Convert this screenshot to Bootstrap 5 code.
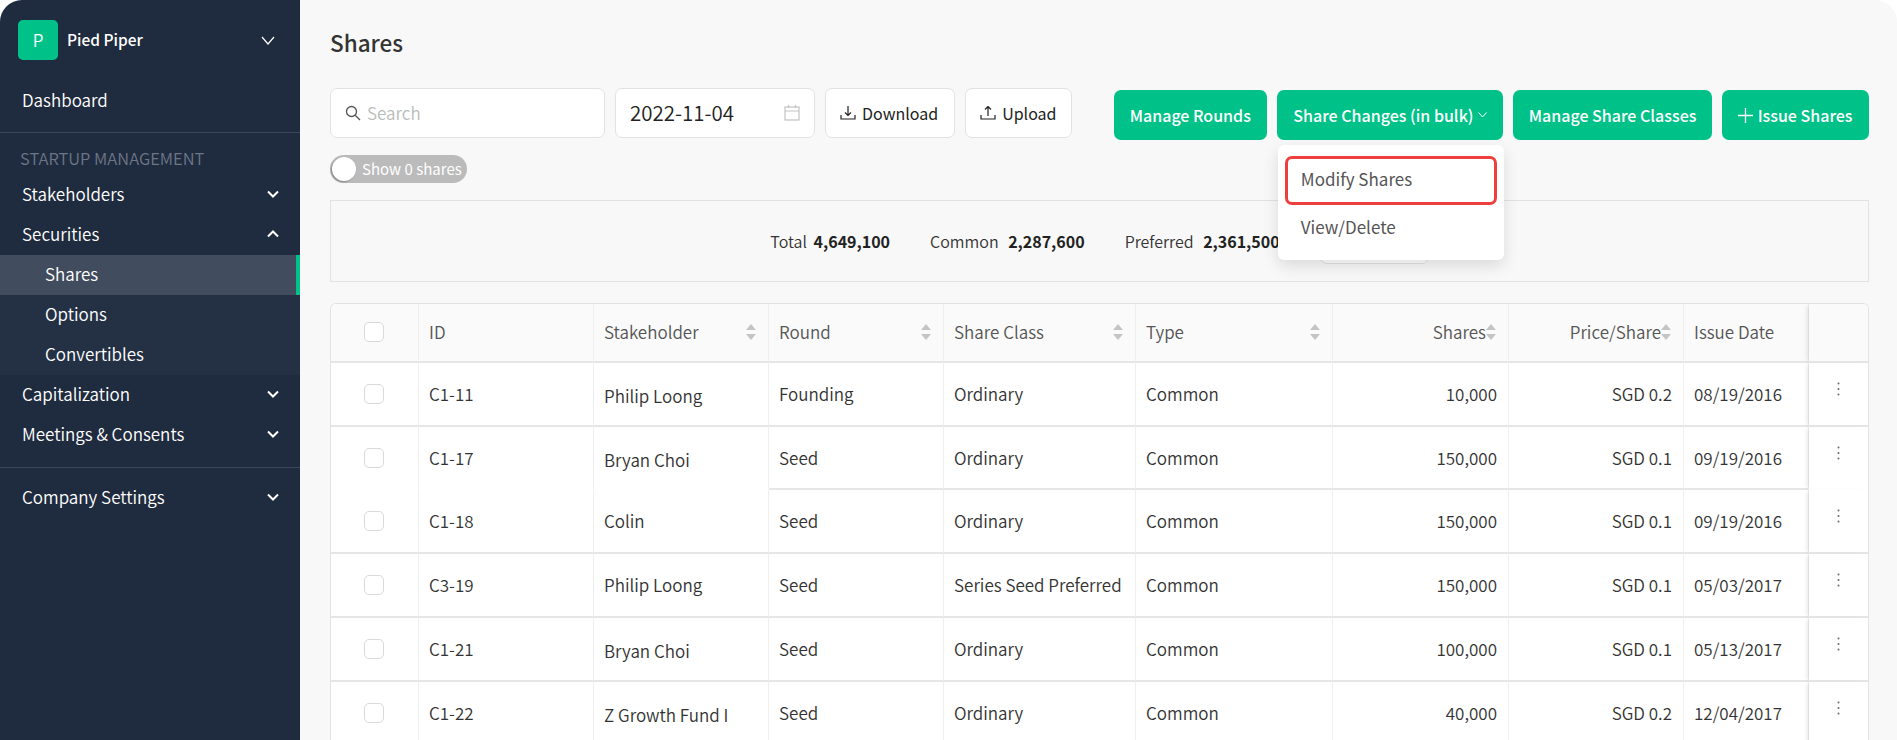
<!DOCTYPE html>
<html lang="en">
<head>
<meta charset="utf-8">
<title>Shares</title>
<link href="https://cdn.jsdelivr.net/npm/bootstrap@5.3.0/dist/css/bootstrap.min.css" rel="stylesheet">
<style>
html,body{height:740px;overflow:hidden;background:#fff;font-family:"Noto Sans CJK KR","Noto Sans",sans-serif;font-size:17px;font-weight:350;color:#333}
.app-shell{height:740px;border-radius:22px 22px 0 0;overflow:hidden;background:#f8f8f8}
.side-bar{width:300px;flex:none;background:#1f2b3e;color:#fff}
.brand-row{height:80px;padding:20px 25px 20px 18px}
.brand-logo{width:40px;height:40px;border-radius:5px;background:#00c288;font-size:17px}
.brand-name{font-size:15.5px;font-weight:500;margin-left:9px;margin-top:-1px}
.dash-row{height:53px;padding:0 22px 2px;line-height:40px;border-bottom:1px solid #3a465a;font-size:17px}
.group-label{color:#6d7687;font-size:16.5px;padding:13px 20px 0;line-height:24px;height:42px}
.side-link{height:40px;padding:0 21px 2px 22px;font-size:17px;color:#fff}
.side-sub{background:#243145}
.side-sub .side-link{padding-left:45px}
.side-sub .side-link.is-on{background:#414c5e;border-right:4px solid #00c288}
.side-rule{border-top:1px solid #3a465a;margin-top:12px;height:11px}
.main-pane{flex:1;min-width:0;padding:22px 28px 0 30px}
.page-title{font-size:22.5px;font-weight:500;color:#333;line-height:40px;margin:0 0 26px}
.tool-row{gap:10px}
.tool-btn{height:50px;border:1px solid #e2e2e2;background:#fff;border-radius:7px;color:#222;font-size:16px;font-weight:400}
.search-box{width:275px;color:#b8bdb9;font-size:17px;padding:0 14px;gap:6px;font-weight:350}
.date-box{width:200px;font-size:20.5px;padding:0 14px 2px;font-weight:350}
.file-btn{padding:0 16px 0 14px;gap:6px}
.file-btn.tight-end{padding-right:14px}
.green-btn{height:50px;background:#00c288;color:#fff;border:0;border-radius:7px;font-size:16px;font-weight:500;padding:0 16px;white-space:nowrap}
.green-btn.roomy{padding:0 16.500px}
.green-btn.snug{padding:0 15.500px}
.green-btn:hover,.green-btn:focus{background:#00c288;color:#fff}
.right-tools{gap:10px;margin-top:2px}
.toggle-pill{width:137px;height:28px;border-radius:14px;background:#bbb;color:#fff;font-size:15px;font-weight:400;padding-left:2px;margin-top:17px}
.toggle-knob{width:24px;height:24px;border-radius:50%;background:#fff;box-shadow:-1px 1px 2px rgba(0,0,0,.3);margin-right:6px}
.sum-box{height:82px;border:1px solid #e2e2e2;margin-top:17px;font-size:16px;gap:40px;color:#333}
.sum-box b{font-weight:700;color:#222;margin-left:3px}
.sum-box span+span b{margin-left:6px}
.sum-blank{width:109px;height:46px;background:#fff;border:1px solid #e2e2e2;border-radius:7px}
.menu-float{top:55px;left:1px;width:226px;height:115px;min-width:0;padding:11px 7px;border:0;border-radius:6px;box-shadow:0 6px 16px rgba(0,0,0,.12)}
.menu-float .dropdown-item{font-size:17px;color:#555;height:49px;line-height:40px;padding:0 13px;border:3px solid transparent;border-radius:7px}
.menu-float .dropdown-item+.dropdown-item{line-height:38px}
.menu-float .dropdown-item.is-marked{border-color:#ee3f3f;background:#fff}
.grid-wrap{margin-top:21px;border:1px solid #e2e2e2;border-bottom:0;border-radius:6px 6px 0 0;background:#fff;overflow:hidden}
.share-grid{table-layout:fixed;width:100%;border-collapse:separate;border-spacing:0;margin:0;font-size:17px;color:#333}
.share-grid th{height:59px;background:#fafafa;font-weight:350;color:#555;padding:0 12px 2px 10px;border-right:1px solid #efefef;border-bottom:2px solid #e6e6e6;vertical-align:middle}
.share-grid td{height:64px;padding:0 12px 0 10px;border-right:1px solid #efefef;border-bottom:2px solid #e6e6e6;vertical-align:middle;white-space:nowrap;background:#fff}
.share-grid td.text-end{padding-right:11px}
.share-grid tr.short-row td{height:63px}
.share-grid td.no-rule{border-bottom-color:transparent}
.share-grid td.nudge-down{padding-top:4px}
.share-grid .act-col{border-right:0;box-shadow:-4px 0 4px -2px rgba(0,0,0,.1);text-align:center;padding:0}
.share-grid td.act-col svg{margin-bottom:12px}
.box-tick{display:block;width:20px;height:20px;margin:0 auto;border:1px solid #d9d9d9;border-radius:5px;background:#fff}
.sort-mark{flex:none}
</style>
</head>
<body>
<div class="app-shell d-flex">
  <nav class="side-bar">
    <div class="brand-row d-flex align-items-center">
      <span class="brand-logo d-flex align-items-center justify-content-center">P</span>
      <span class="brand-name flex-grow-1">Pied Piper</span>
      <svg width="14" height="9" viewBox="0 0 14 9" fill="none" stroke="#fff" stroke-width="1.2"><path d="M1 1l6 7 6-7"/></svg>
    </div>
    <div class="dash-row">Dashboard</div>
    <div class="group-label">STARTUP MANAGEMENT</div>
    <div class="side-link d-flex align-items-center justify-content-between">Stakeholders <svg width="12" height="8" viewBox="0 0 12 8" fill="none" stroke="#fff" stroke-width="2"><path d="M1 1.5l5 5 5-5"/></svg></div>
    <div class="side-link d-flex align-items-center justify-content-between">Securities <svg width="12" height="8" viewBox="0 0 12 8" fill="none" stroke="#fff" stroke-width="2"><path d="M1 6.5l5-5 5 5"/></svg></div>
    <div class="side-sub">
      <div class="side-link is-on d-flex align-items-center">Shares</div>
      <div class="side-link d-flex align-items-center">Options</div>
      <div class="side-link d-flex align-items-center">Convertibles</div>
    </div>
    <div class="side-link d-flex align-items-center justify-content-between">Capitalization <svg width="12" height="8" viewBox="0 0 12 8" fill="none" stroke="#fff" stroke-width="2"><path d="M1 1.5l5 5 5-5"/></svg></div>
    <div class="side-link d-flex align-items-center justify-content-between">Meetings &amp; Consents <svg width="12" height="8" viewBox="0 0 12 8" fill="none" stroke="#fff" stroke-width="2"><path d="M1 1.5l5 5 5-5"/></svg></div>
    <div class="side-rule"></div>
    <div class="side-link d-flex align-items-center justify-content-between">Company Settings <svg width="12" height="8" viewBox="0 0 12 8" fill="none" stroke="#fff" stroke-width="2"><path d="M1 1.5l5 5 5-5"/></svg></div>
  </nav>
  <main class="main-pane">
    <h1 class="page-title">Shares</h1>
    <div class="d-flex justify-content-between align-items-start">
      <div>
        <div class="d-flex tool-row">
          <div class="tool-btn search-box d-flex align-items-center">
            <svg width="16" height="16" viewBox="0 0 16 16" fill="none" stroke="#555" stroke-width="1.3"><circle cx="6.5" cy="6.5" r="5"/><path d="M10.2 10.2L15 15"/></svg>
            <span>Search</span>
          </div>
          <div class="tool-btn date-box d-flex align-items-center justify-content-between">
            <span>2022-11-04</span>
            <svg width="16" height="17" viewBox="0 0 16 17" fill="none" stroke="#c4c4c4" stroke-width="1.2"><rect x="1" y="3" width="14" height="13"/><path d="M1 7h14M4.5 1v3M11.500 1v3"/></svg>
          </div>
          <button class="tool-btn file-btn btn d-flex align-items-center" type="button">
            <svg width="16" height="14" viewBox="0 0 16 14" fill="none" stroke="#222" stroke-width="1.2"><path d="M8 0v9M5 6.500l3 3 3-3M1 9v4h14V9"/></svg>Download</button>
          <button class="tool-btn file-btn tight-end btn d-flex align-items-center" type="button">
            <svg width="16" height="14" viewBox="0 0 16 14" fill="none" stroke="#222" stroke-width="1.2"><path d="M8 10V1M5 3.500l3-3 3 3M1 9v4h14V9"/></svg>Upload</button>
        </div>
        <div class="toggle-pill d-flex align-items-center"><span class="toggle-knob"></span>Show 0 shares</div>
      </div>
      <div class="d-flex right-tools">
        <button class="green-btn btn" type="button">Manage Rounds</button>
        <div class="dropdown position-relative">
          <button class="green-btn roomy btn d-flex align-items-center gap-1" type="button">Share Changes (in bulk) <svg width="9" height="6" viewBox="0 0 9 6" fill="none" stroke="#fff" stroke-width="1"><path d="M.5.500l4 4.500 4-4.500"/></svg></button>
          <div class="dropdown-menu show menu-float">
            <a class="dropdown-item is-marked" href="#">Modify Shares</a>
            <a class="dropdown-item" href="#">View/Delete</a>
          </div>
        </div>
        <button class="green-btn snug btn" type="button">Manage Share Classes</button>
        <button class="green-btn roomy btn d-flex align-items-center gap-1" type="button"><svg width="15" height="15" viewBox="0 0 15 15" fill="none" stroke="#fff" stroke-width="1.300"><path d="M7.500 0v15M0 7.500h15"/></svg>Issue Shares</button>
      </div>
    </div>
    <div class="sum-box d-flex align-items-center justify-content-center">
      <span>Total <b>4,649,100</b></span>
      <span>Common <b>2,287,600</b></span>
      <span>Preferred <b>2,361,500</b></span>
      <span class="sum-blank"></span>
    </div>
    <div class="grid-wrap">
      <table class="share-grid">
        <colgroup><col style="width:88px"><col style="width:175px"><col style="width:175px"><col style="width:175px"><col style="width:192px"><col style="width:197px"><col style="width:176px"><col style="width:175px"><col style="width:125px"><col style="width:59px"></colgroup>
        <thead>
          <tr>
            <th><span class="box-tick"></span></th>
            <th>ID</th>
            <th><div class="d-flex justify-content-between align-items-center">Stakeholder <svg class="sort-mark" width="10" height="16" viewBox="0 0 10 16" fill="#c4c4c4"><path d="M5 0l5 6H0zM5 16l5-6H0z"/></svg></div></th>
            <th><div class="d-flex justify-content-between align-items-center">Round <svg class="sort-mark" width="10" height="16" viewBox="0 0 10 16" fill="#c4c4c4"><path d="M5 0l5 6H0zM5 16l5-6H0z"/></svg></div></th>
            <th><div class="d-flex justify-content-between align-items-center">Share Class <svg class="sort-mark" width="10" height="16" viewBox="0 0 10 16" fill="#c4c4c4"><path d="M5 0l5 6H0zM5 16l5-6H0z"/></svg></div></th>
            <th><div class="d-flex justify-content-between align-items-center">Type <svg class="sort-mark" width="10" height="16" viewBox="0 0 10 16" fill="#c4c4c4"><path d="M5 0l5 6H0zM5 16l5-6H0z"/></svg></div></th>
            <th><div class="d-flex justify-content-end align-items-center">Shares<svg class="sort-mark" width="10" height="16" viewBox="0 0 10 16" fill="#c4c4c4"><path d="M5 0l5 6H0zM5 16l5-6H0z"/></svg></div></th>
            <th><div class="d-flex justify-content-end align-items-center">Price/Share<svg class="sort-mark" width="10" height="16" viewBox="0 0 10 16" fill="#c4c4c4"><path d="M5 0l5 6H0zM5 16l5-6H0z"/></svg></div></th>
            <th>Issue Date</th>
            <th class="act-col"></th>
          </tr>
        </thead>
        <tbody>
          <tr><td><span class="box-tick"></span></td><td>C1-11</td><td class="nudge-down">Philip Loong</td><td>Founding</td><td>Ordinary</td><td>Common</td><td class="text-end">10,000</td><td class="text-end">SGD 0.2</td><td>08/19/2016</td><td class="act-col"><svg width="3" height="14" viewBox="0 0 3 14" fill="#666"><circle cx="1.500" cy="1.500" r="1"/><circle cx="1.500" cy="7" r="1"/><circle cx="1.500" cy="12.500" r="1"/></svg></td></tr>
          <tr class="short-row"><td class="no-rule"><span class="box-tick"></span></td><td class="no-rule">C1-17</td><td class="no-rule nudge-down">Bryan Choi</td><td>Seed</td><td>Ordinary</td><td>Common</td><td class="text-end">150,000</td><td class="text-end">SGD 0.1</td><td>09/19/2016</td><td class="act-col no-rule"><svg width="3" height="14" viewBox="0 0 3 14" fill="#666"><circle cx="1.500" cy="1.500" r="1"/><circle cx="1.500" cy="7" r="1"/><circle cx="1.500" cy="12.500" r="1"/></svg></td></tr>
          <tr><td><span class="box-tick"></span></td><td>C1-18</td><td>Colin</td><td>Seed</td><td>Ordinary</td><td>Common</td><td class="text-end">150,000</td><td class="text-end">SGD 0.1</td><td>09/19/2016</td><td class="act-col"><svg width="3" height="14" viewBox="0 0 3 14" fill="#666"><circle cx="1.500" cy="1.500" r="1"/><circle cx="1.500" cy="7" r="1"/><circle cx="1.500" cy="12.500" r="1"/></svg></td></tr>
          <tr><td><span class="box-tick"></span></td><td>C3-19</td><td>Philip Loong</td><td>Seed</td><td>Series Seed Preferred</td><td>Common</td><td class="text-end">150,000</td><td class="text-end">SGD 0.1</td><td>05/03/2017</td><td class="act-col"><svg width="3" height="14" viewBox="0 0 3 14" fill="#666"><circle cx="1.500" cy="1.500" r="1"/><circle cx="1.500" cy="7" r="1"/><circle cx="1.500" cy="12.500" r="1"/></svg></td></tr>
          <tr><td><span class="box-tick"></span></td><td>C1-21</td><td class="nudge-down">Bryan Choi</td><td>Seed</td><td>Ordinary</td><td>Common</td><td class="text-end">100,000</td><td class="text-end">SGD 0.1</td><td>05/13/2017</td><td class="act-col"><svg width="3" height="14" viewBox="0 0 3 14" fill="#666"><circle cx="1.500" cy="1.500" r="1"/><circle cx="1.500" cy="7" r="1"/><circle cx="1.500" cy="12.500" r="1"/></svg></td></tr>
          <tr><td><span class="box-tick"></span></td><td>C1-22</td><td class="nudge-down">Z Growth Fund I</td><td>Seed</td><td>Ordinary</td><td>Common</td><td class="text-end">40,000</td><td class="text-end">SGD 0.2</td><td>12/04/2017</td><td class="act-col"><svg width="3" height="14" viewBox="0 0 3 14" fill="#666"><circle cx="1.500" cy="1.500" r="1"/><circle cx="1.500" cy="7" r="1"/><circle cx="1.500" cy="12.500" r="1"/></svg></td></tr>
        </tbody>
      </table>
    </div>
  </main>
</div>
<script src="https://cdn.jsdelivr.net/npm/bootstrap@5.3.0/dist/js/bootstrap.bundle.min.js"></script>
</body>
</html>
